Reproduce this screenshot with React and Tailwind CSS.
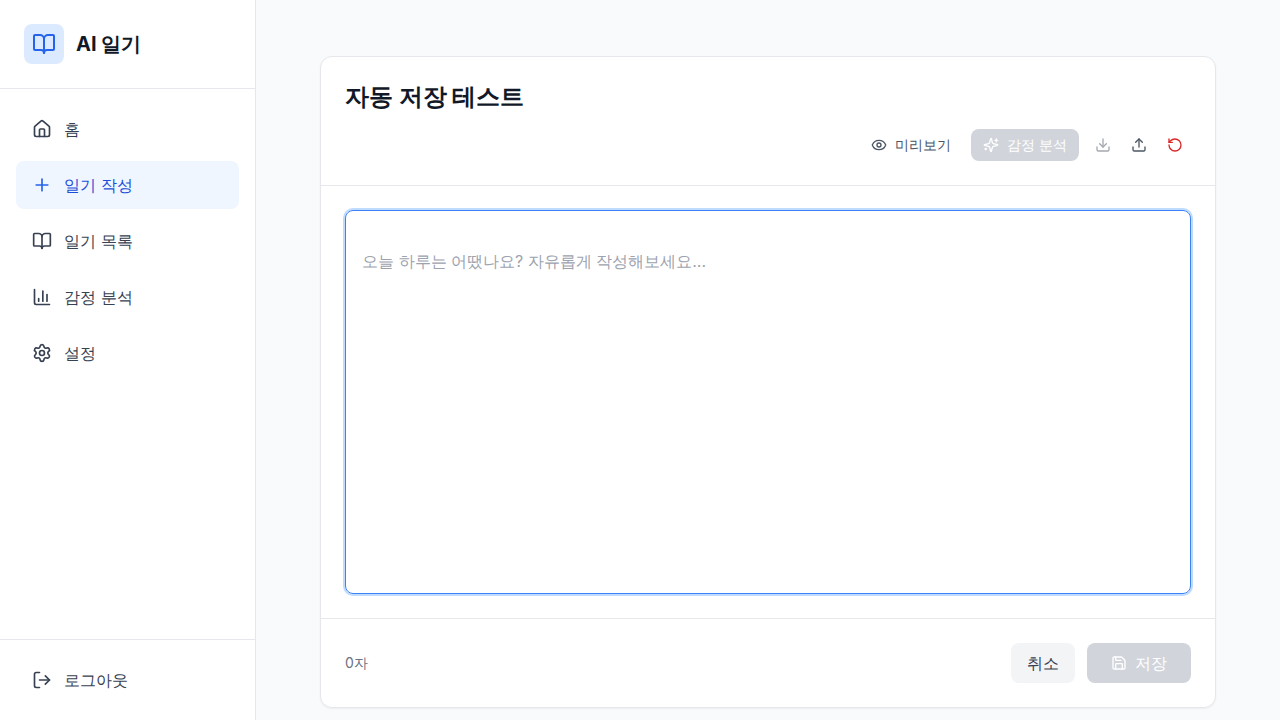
import { BookOpen, ChartColumn, Download, Eye, House, LogOut, Plus, RotateCcw, Save, Settings, Upload } from 'lucide-react';
import { useState } from 'react';

const navItems = [
  { label: '홈', icon: House },
  { label: '일기 작성', icon: Plus, active: true },
  { label: '일기 목록', icon: BookOpen },
  { label: '감정 분석', icon: ChartColumn },
  { label: '설정', icon: Settings },
];

function Sparkles({ className }) {
  return (
    <svg viewBox="0 0 24 24" fill="none" stroke="currentColor" strokeWidth="2" strokeLinecap="round" strokeLinejoin="round" aria-hidden="true" className={className}>
      <path d="M9.937 15.5A2 2 0 0 0 8.5 14.063l-6.135-1.582a.5.5 0 0 1 0-.962L8.5 9.936A2 2 0 0 0 9.937 8.5l1.582-6.135a.5.5 0 0 1 .963 0L14.063 8.5A2 2 0 0 0 15.5 9.937l6.135 1.581a.5.5 0 0 1 0 .964L15.5 14.063a2 2 0 0 0-1.437 1.437l-1.582 6.135a.5.5 0 0 1-.963 0z" />
      <path d="M20 3v4" />
      <path d="M22 5h-4" />
      <path d="M4 17v2" />
      <path d="M5 18H3" />
    </svg>
  );
}

function Sidebar() {
  return (
    <aside className="sticky top-0 flex h-screen w-64 shrink-0 flex-col border-r border-[#e5e7eb] bg-white">
      <div className="flex items-center gap-3 border-b border-[#e5e7eb] p-6">
        <div className="flex size-10 items-center justify-center rounded-lg bg-[#dbeafe]">
          <BookOpen className="size-6 text-[#2563eb]" />
        </div>
        <span className="text-xl font-bold text-[#111827]">AI 일기</span>
      </div>
      <nav className="flex flex-1 flex-col gap-2 p-4">
        {navItems.map(({ label, icon: Icon, active }) => (
          <a
            key={label}
            href="#"
            aria-current={active ? 'page' : undefined}
            className={`flex items-center gap-3 rounded-lg px-4 py-3 ${active ? 'bg-[#eff6ff] text-[#1d4ed8]' : 'text-[#374151] hover:bg-[#f9fafb]'}`}
          >
            <Icon className={`size-5 ${active ? 'text-[#2563eb]' : ''}`} />
            <span>{label}</span>
          </a>
        ))}
      </nav>
      <div className="border-t border-[#e5e7eb] p-4">
        <button type="button" className="flex w-full items-center gap-3 rounded-lg px-4 py-3 text-[#374151] hover:bg-[#f9fafb]">
          <LogOut className="size-5" />
          <span>로그아웃</span>
        </button>
      </div>
    </aside>
  );
}

function Editor() {
  const [title, setTitle] = useState('자동 저장 테스트');
  const [content, setContent] = useState('');
  const empty = content.trim() === '';

  return (
    <section className="mx-auto max-w-4xl rounded-xl border border-[#e5e7eb] bg-white shadow-[0_1px_2px_0_rgb(0_0_0/0.05)]">
      <header className="flex flex-col gap-4 border-b border-[#e5e7eb] p-6">
        <input
          type="text"
          aria-label="제목"
          value={title}
          onChange={(e) => setTitle(e.target.value)}
          className="h-8 w-full bg-transparent text-2xl font-bold text-[#111827] outline-none"
        />
        <div className="flex items-center justify-end gap-2">
          <button type="button" className="flex h-8 items-center gap-2 rounded-lg px-3 text-sm text-[#4b5563]">
            <Eye className="size-4" />
            <span>미리보기</span>
          </button>
          <button type="button" disabled={empty} className="flex h-8 items-center gap-2 rounded-lg bg-[#2563eb] px-3 text-sm text-white disabled:bg-[#d1d5db]">
            <Sparkles className="size-4" />
            <span>감정 분석</span>
          </button>
          <div className="flex items-center gap-1">
            <button type="button" aria-label="내보내기" disabled={empty} className="rounded-lg p-2 text-[#4b5563] disabled:opacity-50">
              <Download className="size-4" />
            </button>
            <button type="button" aria-label="가져오기" className="rounded-lg p-2 text-[#4b5563]">
              <Upload className="size-4" />
            </button>
            <button type="button" aria-label="초기화" className="rounded-lg p-2 text-[#dc2626]">
              <RotateCcw className="size-4" />
            </button>
          </div>
        </div>
      </header>
      <div className="p-6">
        <textarea
          aria-label="일기 내용"
          value={content}
          onChange={(e) => setContent(e.target.value)}
          placeholder="오늘 하루는 어땠나요? 자유롭게 작성해보세요..."
          className="block h-96 w-full resize-none rounded-lg border border-[#3b82f6] px-4 pt-9 pb-4 leading-7 text-[#111827] ring-2 ring-[#bfdbfe] outline-none placeholder:text-[#9ca3af]"
        />
      </div>
      <footer className="flex items-center justify-between border-t border-[#e5e7eb] p-6">
        <span className="text-sm text-[#6b7280]">{content.length}자</span>
        <div className="flex items-center gap-3">
          <button type="button" className="h-10 rounded-lg bg-[#f3f4f6] px-4 text-[#374151]">취소</button>
          <button type="button" disabled={empty} className="flex h-10 items-center gap-2 rounded-lg bg-[#2563eb] px-6 text-white disabled:bg-[#d1d5db]">
            <Save className="size-4" />
            <span>저장</span>
          </button>
        </div>
      </footer>
    </section>
  );
}

export default function App() {
  return (
    <div className="flex min-h-screen bg-[#f9fafb] font-['Inter',system-ui,sans-serif]">
      <Sidebar />
      <main className="h-screen flex-1 overflow-hidden px-8 py-14">
        <Editor />
      </main>
    </div>
  );
}
